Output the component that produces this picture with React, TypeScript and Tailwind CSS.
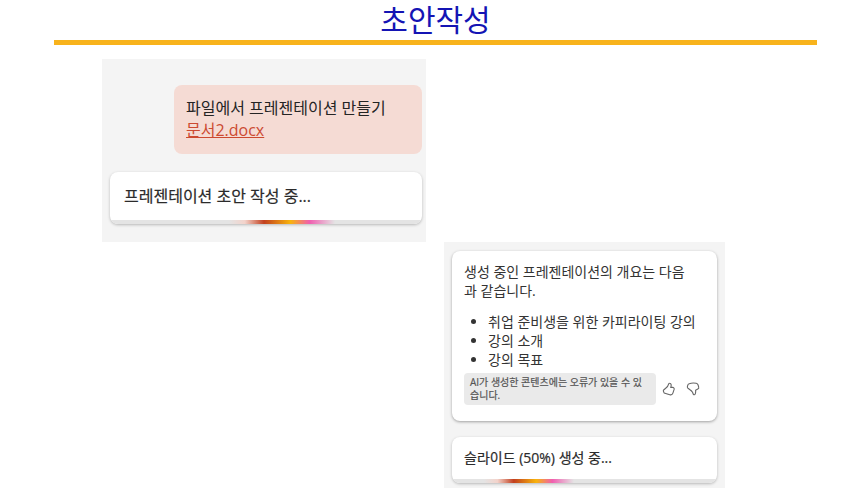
import type { ReactNode } from "react";

const outline = ["취업 준비생을 위한 카피라이팅 강의", "강의 소개", "강의 목표"];

const thumbUp =
  "M7.6 1.2c-.5-.1-.8.2-.9.7C6.3 3.8 5 5.400 3.400 6.500L1.900 7.700c-.5.4-.7 1-.4 1.600l.3.9c.2.500.6.900 1.100 1l4.900 1.500c1.400.4 2.700-.3 3.100-1.600l1.200-3.700c.3-1-.4-2-1.500-2H8.700c.4-1 .6-1.900.4-2.900-.2-.8-.8-1.200-1.500-1.300z";

const thumbDown =
  "M3.200 1.700C4.600 1.200 8.400 1 10.200 1.300c1 .2 1.600.8 1.900 1.700l.6 2.200c.3.900-.1 1.500-.9 1.900L9.600 8.200c.2 1.200.1 2.500-.3 3.700-.3.900-1.300 1.100-1.900.4-.5-.6-.4-1.300-.9-2.100-.6-1-1.500-1.700-2.500-2.400L2 6.300c-.6-.5-.8-1.100-.6-1.800l.5-1.600c.2-.6.6-1 1.300-1.200z";

function ThumbIcon({ path }: { path: string }) {
  return (
    <svg
      viewBox="0 0 14 14"
      className="size-3.5"
      fill="none"
      stroke="#666666"
      strokeWidth="1.1"
      strokeLinejoin="round"
      aria-hidden="true"
    >
      <path d={path} />
    </svg>
  );
}

function ProgressCard({
  label,
  className,
  barClassName,
  children,
}: {
  label: string;
  className: string;
  barClassName: string;
  children: ReactNode;
}) {
  return (
    <div className="overflow-hidden rounded-lg bg-white shadow-[0_1px_3px_rgba(0,0,0,0.25)]">
      <p className={`text-[#2b2b2b] [-webkit-text-stroke:0.2px_#2b2b2b] ${className}`}>{children}</p>
      <div role="progressbar" aria-label={label} className="h-1 bg-[#e4e4e4]">
        <div
          className={`h-full bg-[linear-gradient(90deg,#e4e4e4_0%,#f3d3cb_15%,#c2401f_33%,#f8b30c_58%,#f05fb0_76%,#e4e4e4_100%)] ${barClassName}`}
        />
      </div>
    </div>
  );
}

export default function App() {
  return (
    <main className="bg-white pr-10 pl-[54px] font-['Open_Sans','Noto_Sans_CJK_KR',sans-serif] text-[#242424]">
      <h1 className="border-b-[5px] border-[#f8b31c] text-center text-[30px] leading-10 text-[#1414b4]">
        초안작성
      </h1>

      <div className="mt-3.5 mr-[92px] ml-12 grid grid-cols-[324fr_281fr] gap-x-[18px]">
        <section className="bg-[#f4f4f4] pt-[26px] pr-1 pb-[18px] pl-2">
          <div className="ml-16 rounded-lg bg-[#f5dbd4] px-3 pt-3 pb-[13px] text-[16px] leading-[22px]">
            <p>파일에서 프레젠테이션 만들기</p>
            <a href="#document" className="text-[#cc4a31] underline">
              문서2.docx
            </a>
          </div>
          <div className="mt-[18px]">
            <ProgressCard
              label="프레젠테이션 초안 작성"
              className="px-3.5 py-3 text-[16px] leading-6"
              barClassName="ml-[38%] w-[34%]"
            >
              프레젠테이션 초안 작성 중...
            </ProgressCard>
          </div>
        </section>

        <section className="col-start-2 row-start-2 bg-[#f4f4f4] px-2 pt-[9px] pb-[5px]">
          <div className="rounded-lg bg-white px-3 pt-[11px] pb-4 text-[14px] leading-[19px] text-[#333333] shadow-[0_1px_3px_rgba(0,0,0,0.35)]">
            <p>
              생성 중인 프레젠테이션의 개요는 다음
              <br />과 같습니다.
            </p>
            <ul className="mt-3 list-disc pl-6 whitespace-nowrap">
              {outline.map((item) => (
                <li key={item}>{item}</li>
              ))}
            </ul>
            <div className="mt-1 flex items-center">
              <p className="w-48 rounded bg-[#eaeaea] py-[3px] pl-1.5 text-[10px] leading-[13px] whitespace-nowrap text-[#555555] [-webkit-text-stroke:0.2px_#555555]">
                AI가 생성한 콘텐츠에는 오류가 있을 수 있
                <br />
                습니다.
              </p>
              <button type="button" aria-label="좋아요" className="ml-1.5">
                <ThumbIcon path={thumbUp} />
              </button>
              <button type="button" aria-label="싫어요" className="ml-2.5">
                <ThumbIcon path={thumbDown} />
              </button>
            </div>
          </div>
          <div className="mt-4">
            <ProgressCard
              label="슬라이드 생성"
              className="px-3 py-3 text-[14px] leading-[18px]"
              barClassName="ml-[12%] w-[34%]"
            >
              슬라이드 (50%) 생성 중...
            </ProgressCard>
          </div>
        </section>
      </div>
    </main>
  );
}
